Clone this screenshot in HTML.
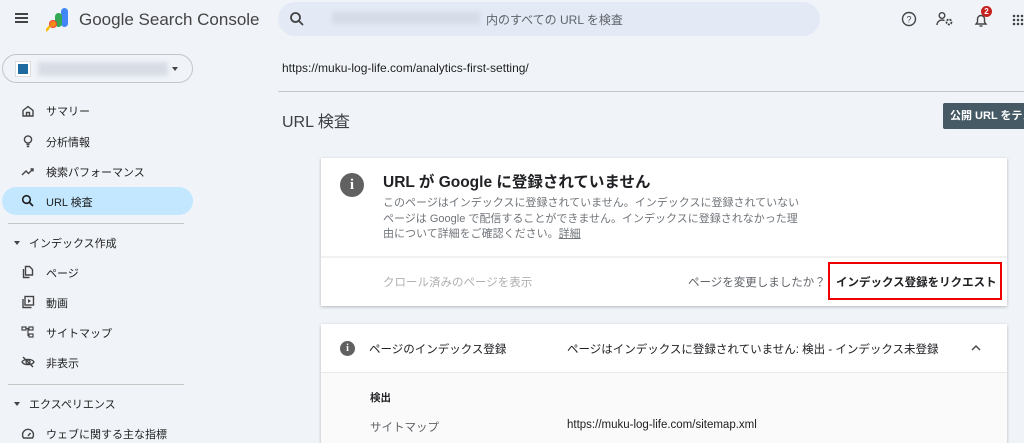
<!DOCTYPE html>
<html><head><meta charset="utf-8"><style>
*{box-sizing:border-box;margin:0;padding:0}
html,body{width:1024px;height:443px;overflow:hidden}
body{background:#f0f4f9;font-family:"Liberation Sans","Noto Sans CJK JP",sans-serif;color:#1f1f1f;position:relative}
.a{position:absolute;white-space:nowrap}
.nav{font-size:11px;color:#1f1f1f;left:46px}
.ic{position:absolute;left:21px;width:14px;height:14px}
.card{position:absolute;left:321px;width:686px;background:#fff;box-shadow:0 1px 3px rgba(0,0,0,.25)}
</style></head><body>
<div class="a" style="left:15px;top:13px;width:13px;height:2px;background:#444;box-shadow:0 4px 0 #444,0 8px 0 #444"></div>
<svg class="a" style="left:46px;top:7px" width="24" height="26" viewBox="0 0 24 26"><rect x="15" y="1" width="7" height="19" rx="3.5" fill="#4285f4"/><rect x="9" y="6" width="7" height="14" rx="3.5" fill="#34a853"/><circle cx="7" cy="17" r="4" fill="#ea4335"/><path d="M4 19 L0 24" stroke="#fbbc04" stroke-width="2.5"/><circle cx="7" cy="17" r="3" fill="#fbbc04" opacity=".6"/></svg>
<div class="a" style="left:79px;top:10px;font-size:17px;color:#444">Google Search Console</div>
<div class="a" style="left:278px;top:2px;width:542px;height:34px;border-radius:17px;background:#e3eaf5"></div>
<svg class="a" style="left:289px;top:11px" width="16" height="16" viewBox="0 0 16 16"><circle cx="6.5" cy="6.5" r="4.5" fill="none" stroke="#444" stroke-width="1.8"/><path d="M10 10l4 4" stroke="#444" stroke-width="1.8"/></svg>
<div class="a" style="left:332px;top:12px;width:148px;height:12px;background:#d5dce8;filter:blur(2px)"></div>
<div class="a" style="left:486px;top:11px;font-size:12px;color:#5f6368">内のすべての URL を検査</div>
<svg class="a" style="left:901px;top:11px" width="16" height="16" viewBox="0 0 16 16"><circle cx="8" cy="8" r="6.5" fill="none" stroke="#444" stroke-width="1.4"/><text x="8" y="11.5" font-size="9" text-anchor="middle" fill="#444" font-family="Liberation Sans">?</text></svg>
<svg class="a" style="left:936px;top:11px" width="18" height="16" viewBox="0 0 18 16"><circle cx="6" cy="4.5" r="2.8" fill="none" stroke="#444" stroke-width="1.4"/><path d="M1 14c0-3 2.5-5 5-5 1 0 2 .3 2.5.7" fill="none" stroke="#444" stroke-width="1.4"/><circle cx="13" cy="11" r="2.5" fill="none" stroke="#444" stroke-width="1.8" stroke-dasharray="2 1"/></svg>
<svg class="a" style="left:974px;top:12px" width="14" height="16" viewBox="0 0 14 16"><path d="M2 12h10l-1.5-2V7a3.5 3.5 0 0 0-7 0v3z" fill="none" stroke="#444" stroke-width="1.4"/><path d="M5.5 14h3" stroke="#444" stroke-width="1.4"/></svg>
<div class="a" style="left:981px;top:6px;width:11px;height:11px;border-radius:50%;background:#c5221f;color:#fff;font-size:8px;font-weight:bold;text-align:center;line-height:11px">2</div>
<div class="a" style="left:1012px;top:14px;width:12px;height:12px;background:radial-gradient(circle,#444 1.2px,transparent 1.4px) 0 0/4px 4px"></div>
<div class="a" style="left:2px;top:54px;width:191px;height:29px;border:1px solid #c4c7c5;border-radius:15px"></div>
<div class="a" style="left:15px;top:61px;width:16px;height:16px;background:#fff;border:1px solid #ddd"><div style="margin:2px;width:10px;height:10px;background:#1e6aa0"></div></div>
<div class="a" style="left:38px;top:62px;width:130px;height:14px;background:#d8dde5;filter:blur(2px)"></div>
<div class="a" style="left:172px;top:67px;border:3px solid transparent;border-top:4px solid #444"></div>
<svg class="ic" style="top:104px" viewBox="0 0 14 14"><path d="M2 6.5L7 2.5l5 4V12H2z M5.5 12V8.5h3V12" fill="none" stroke="#444" stroke-width="1.4"/></svg>
<div class="a nav" style="top:103px">サマリー</div>
<svg class="ic" style="top:134px" viewBox="0 0 14 14"><circle cx="7" cy="5.5" r="3.6" fill="none" stroke="#444" stroke-width="1.4"/><path d="M5.5 10.5h3M5.8 12.5h2.4" stroke="#444" stroke-width="1.4"/></svg>
<div class="a nav" style="top:134px">分析情報</div>
<svg class="ic" style="top:164px" viewBox="0 0 14 14"><path d="M1 11l4-4 2.5 2.5L12 5M9.5 5H12v2.5" fill="none" stroke="#444" stroke-width="1.4"/></svg>
<div class="a nav" style="top:164px">検索パフォーマンス</div>
<div class="a" style="left:2px;top:187px;width:191px;height:28px;border-radius:14px;background:#c2e7ff"></div>
<svg class="ic" style="top:194px" viewBox="0 0 14 14"><circle cx="5.5" cy="5.5" r="3.8" fill="none" stroke="#1f1f1f" stroke-width="1.6"/><path d="M8.5 8.5L12 12" stroke="#1f1f1f" stroke-width="1.8"/></svg>
<div class="a nav" style="top:194px">URL 検査</div>
<div class="a" style="left:8px;top:223px;width:176px;height:1px;background:#c4c7c5"></div>
<div class="a" style="left:14px;top:241px;border:3px solid transparent;border-top:4px solid #444"></div>
<div class="a" style="left:29px;top:235px;font-size:11px;color:#1f1f1f">インデックス作成</div>
<svg class="ic" style="top:265px" viewBox="0 0 14 14"><path d="M4.5 1.5h4l3 3V10h-7z M2.5 4v8.5h6" fill="none" stroke="#444" stroke-width="1.4"/></svg>
<div class="a nav" style="top:265px">ページ</div>
<svg class="ic" style="top:295px" viewBox="0 0 14 14"><rect x="4" y="1.5" width="8.5" height="8.5" fill="none" stroke="#444" stroke-width="1.4"/><path d="M2 4v8.5h8.5" fill="none" stroke="#444" stroke-width="1.4"/><path d="M7 4v4l3-2z" fill="#444"/></svg>
<div class="a nav" style="top:295px">動画</div>
<svg class="ic" style="top:325px" viewBox="0 0 14 14"><rect x="1" y="2" width="4" height="3" fill="none" stroke="#444" stroke-width="1.2"/><rect x="8" y="2" width="4" height="3" fill="none" stroke="#444" stroke-width="1.2"/><rect x="8" y="9" width="4" height="3" fill="none" stroke="#444" stroke-width="1.2"/><path d="M5 3.5h3M7 3.5v7h1" fill="none" stroke="#444" stroke-width="1.2"/></svg>
<div class="a nav" style="top:325px">サイトマップ</div>
<svg class="ic" style="top:355px" viewBox="0 0 14 14"><path d="M1 7c2-3.5 10-3.5 12 0-2 3.5-10 3.5-12 0z" fill="none" stroke="#444" stroke-width="1.3"/><circle cx="7" cy="7" r="2" fill="none" stroke="#444" stroke-width="1.3"/><path d="M2 2l10 10" stroke="#444" stroke-width="1.4"/></svg>
<div class="a nav" style="top:355px">非表示</div>
<div class="a" style="left:8px;top:384px;width:176px;height:1px;background:#c4c7c5"></div>
<div class="a" style="left:14px;top:402px;border:3px solid transparent;border-top:4px solid #444"></div>
<div class="a" style="left:29px;top:396px;font-size:11px;color:#1f1f1f">エクスペリエンス</div>
<svg class="ic" style="top:427px" viewBox="0 0 14 14"><path d="M2.5 11a5.5 5.5 0 1 1 9 0z" fill="none" stroke="#444" stroke-width="1.4"/><path d="M7 9l2.5-3" stroke="#444" stroke-width="1.4"/></svg>
<div class="a nav" style="top:426px">ウェブに関する主な指標</div>
<div class="a" style="left:282px;top:61px;font-size:12px;color:#1f1f1f">https://muku-log-life.com/analytics-first-setting/</div>
<div class="a" style="left:278px;top:91px;width:746px;height:1px;background:#c4c7c5"></div>
<div class="a" style="left:282px;top:108px;font-size:16px;color:#3c4043">URL 検査</div>
<div class="a" style="left:943px;top:103px;width:90px;height:26px;background:#455a64;border-radius:2px;color:#fff;font-size:11px;font-weight:bold;line-height:26px;padding-left:7px">公開 URL をテスト</div>
<div class="card" style="top:158px;height:148px">
 <div class="a" style="left:19px;top:15px;width:24px;height:24px;border-radius:50%;background:#616161;color:#fff;font-weight:bold;font-size:15px;text-align:center;line-height:24px;font-family:'Liberation Serif',serif">i</div>
 <div class="a" style="left:62px;top:12px;font-size:15.5px;font-weight:bold;color:#202124">URL が Google に登録されていません</div>
 <div class="a" style="left:62px;top:38px;font-size:11px;color:#70757a;line-height:15.5px">このページはインデックスに登録されていません。インデックスに登録されていない<br>ページは Google で配信することができません。インデックスに登録されなかった理<br>由について詳細をご確認ください。<u>詳細</u></div>
 <div class="a" style="left:0;top:98px;width:686px;height:2px;background:#f1f1f1"></div>
 <div class="a" style="left:62px;top:116px;font-size:11.5px;color:#b0b0b0">クロール済みのページを表示</div>
 <div class="a" style="left:367px;top:116px;font-size:11.5px;color:#5f6368">ページを変更しましたか？</div>
 <div class="a" style="left:507px;top:104px;width:174px;height:38px;border:2px solid #e00"></div>
 <div class="a" style="left:515px;top:116px;font-size:11.5px;color:#202124;font-weight:bold">インデックス登録をリクエスト</div>
</div>
<div class="card" style="top:324px;height:125px">
 <div class="a" style="left:19px;top:17px;width:15px;height:15px;border-radius:50%;background:#616161;color:#fff;font-weight:bold;font-size:10px;text-align:center;line-height:15px;font-family:'Liberation Serif',serif">i</div>
 <div class="a" style="left:48px;top:17px;font-size:11.5px;color:#202124">ページのインデックス登録</div>
 <div class="a" style="left:246px;top:17px;font-size:11.5px;color:#202124">ページはインデックスに登録されていません: 検出 - インデックス未登録</div>
 <svg class="a" style="left:650px;top:20px" width="10" height="8" viewBox="0 0 10 8"><path d="M1 6l4-4 4 4" fill="none" stroke="#444" stroke-width="1.4"/></svg>
 <div class="a" style="left:0;top:48px;width:686px;height:77px;background:#fafafa;border-top:1px solid #e8e8e8"></div>
 <div class="a" style="left:49px;top:66px;font-size:10.5px;color:#202124;font-weight:bold">検出</div>
 <div class="a" style="left:49px;top:95px;font-size:11.5px;color:#5f6368">サイトマップ</div>
 <div class="a" style="left:246px;top:95px;font-size:11.5px;color:#202124">https://muku-log-life.com/sitemap.xml</div>
</div>
</body></html>
